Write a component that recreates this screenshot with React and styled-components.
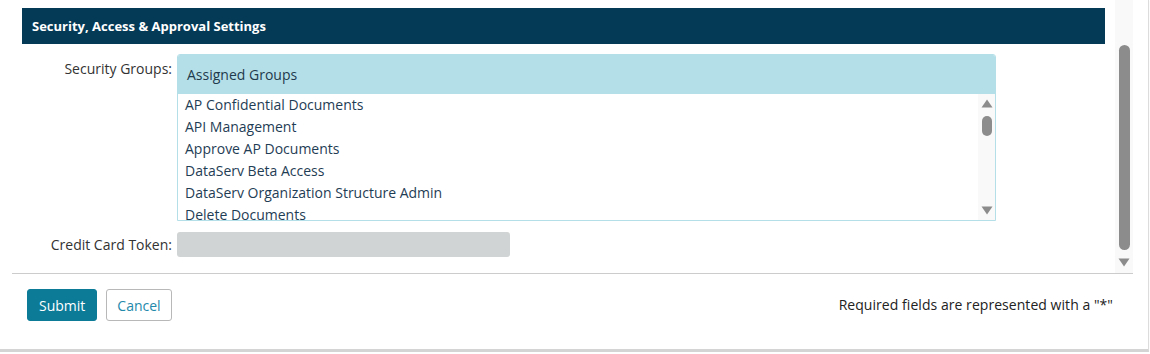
import React from "react";
import styled, { createGlobalStyle } from "styled-components";

const Global = createGlobalStyle`
  html, body { margin: 0; padding: 0; background: #ffffff; }
  body { font-family: "Open Sans", "Liberation Sans", Arial, sans-serif; font-size: 14px; color: #222; }
  * { box-sizing: border-box; }
`;

const Card = styled.div`
  width: 1149px;
  height: 352px;
  padding: 0 15px 0 12px;
  background: #fff;
  border-right: 1px solid #dcdcdc;
  border-bottom: 3px solid #d4d4d4;
  box-shadow: 0 1px 1px rgba(0, 0, 0, 0.08);
  display: flex;
  flex-direction: column;
`;

const ScrollArea = styled.div`
  display: flex;
  height: 273px;
`;

const Content = styled.div`
  flex: 1;
  padding: 8px 10px 0 10px;
  display: flex;
  flex-direction: column;
`;

const SectionHeader = styled.div`
  height: 36px;
  background: #053a56;
  color: #fff;
  font-weight: 700;
  font-size: 13px;
  display: flex;
  align-items: center;
  padding-left: 10px;
`;

const FormRow = styled.div`
  display: flex;
  align-items: ${(p) => (p.$top ? "flex-start" : "center")};
  gap: 5px;
  margin-top: ${(p) => p.$mt}px;
`;

const Label = styled.div`
  width: 150px;
  text-align: right;
  line-height: 20px;
  color: #333;
  padding-top: ${(p) => p.$pt || 0}px;
`;

const ListBox = styled.div`
  width: 819px;
  height: 167px;
  border: 1px solid #b5dfe8;
  border-radius: 3px 3px 0 0;
  display: flex;
  flex-direction: column;
  overflow: hidden;
`;

const ListHeader = styled.div`
  height: 39px;
  background: #b5dfe8;
  color: #1e3a4c;
  display: flex;
  align-items: center;
  padding-left: 9px;
  padding-bottom: 1px;
  flex-shrink: 0;
`;

const ListBody = styled.div`
  flex: 1;
  display: flex;
  min-height: 0;
`;

const Items = styled.ul`
  flex: 1;
  list-style: none;
  margin: 0;
  padding: 0 0 0 7px;
  overflow: hidden;
`;

const Item = styled.li`
  line-height: 22px;
  color: #1f3d55;
  white-space: nowrap;
`;

const Track = styled.div`
  width: ${(p) => p.$w}px;
  background: #f9f9f9;
  display: flex;
  flex-direction: column;
  align-items: center;
  padding-top: ${(p) => p.$pt}px;
  flex-shrink: 0;
`;

const Thumb = styled.div`
  width: ${(p) => p.$w}px;
  height: ${(p) => p.$h}px;
  margin-top: ${(p) => p.$mt}px;
  border-radius: ${(p) => p.$w / 2}px;
  background: #8c8c8c;
`;

const ArrowBox = styled.svg`
  display: block;
  margin-top: ${(p) => p.$mt || 0}px;
  flex-shrink: 0;
`;

const Arrow = ({ dir, mt }) => (
  <ArrowBox $mt={mt} width="12" height="9" viewBox="0 0 12 9">
    {dir === "up" ? (
      <path d="M6 0.5 L11.5 8.5 L0.5 8.5 Z" fill="#8c8c8c" />
    ) : (
      <path d="M0.5 0.5 L11.5 0.5 L6 8.5 Z" fill="#8c8c8c" />
    )}
  </ArrowBox>
);

const TokenInput = styled.div`
  width: 333px;
  height: 25px;
  background: #d1d4d4;
  border-radius: 3px;
`;

const Footer = styled.div`
  flex: 1;
  border-top: 1px solid #cccccc;
  display: flex;
  align-items: flex-start;
  justify-content: space-between;
  padding: 15px 20px 0 15px;
`;

const Buttons = styled.div`
  display: flex;
  gap: 9px;
`;

const Button = styled.button`
  height: 32px;
  padding: 0 ${(p) => (p.$primary ? 11 : 10)}px;
  font-family: inherit;
  font-size: 14px;
  border-radius: 3px;
  border: 1px solid ${(p) => (p.$primary ? "#0b7b98" : "#b8b8b8")};
  background: ${(p) => (p.$primary ? "#0b7b98" : "#ffffff")};
  color: ${(p) => (p.$primary ? "#ffffff" : "#2389ab")};
  cursor: pointer;
`;

const Note = styled.div`
  line-height: 32px;
  color: #222;
  letter-spacing: 0.05px;
`;

const groups = [
  "AP Confidential Documents",
  "API Management",
  "Approve AP Documents",
  "DataServ Beta Access",
  "DataServ Organization Structure Admin",
  "Delete Documents",
];

export default function App() {
  return (
    <>
      <Global />
      <Card>
        <ScrollArea>
          <Content>
            <SectionHeader>Security, Access &amp; Approval Settings</SectionHeader>
            <FormRow $top $mt={10}>
              <Label $pt={5}>Security Groups:</Label>
              <ListBox>
                <ListHeader>Assigned Groups</ListHeader>
                <ListBody>
                  <Items>
                    {groups.map((g) => (
                      <Item key={g}>{g}</Item>
                    ))}
                  </Items>
                  <Track $w={17} $pt={5}>
                    <Arrow dir="up" />
                    <Thumb $w={10} $h={20} $mt={8} />
                    <Arrow dir="down" mt={70} />
                  </Track>
                </ListBody>
              </ListBox>
            </FormRow>
            <FormRow $mt={11}>
              <Label>Credit Card Token:</Label>
              <TokenInput />
            </FormRow>
          </Content>
          <Track $w={18} $pt={45}>
            <Thumb $w={11} $h={205} $mt={0} />
            <Arrow dir="down" mt={8} />
          </Track>
        </ScrollArea>
        <Footer>
          <Buttons>
            <Button $primary>Submit</Button>
            <Button>Cancel</Button>
          </Buttons>
          <Note>Required fields are represented with a "*"</Note>
        </Footer>
      </Card>
    </>
  );
}
